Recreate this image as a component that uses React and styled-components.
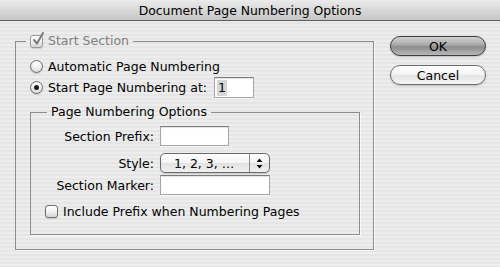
import React from 'react';
import styled, { createGlobalStyle } from 'styled-components';

const GlobalStyle = createGlobalStyle`
  html, body {
    margin: 0;
    padding: 0;
  }
  body {
    font-family: "DejaVu Sans", "Liberation Sans", sans-serif;
    font-size: 12.5px;
    color: #000;
  }
`;

const Window = styled.div`
  width: 500px;
  height: 267px;
  overflow: hidden;
  background: repeating-linear-gradient(
    to bottom,
    #ededed 0px,
    #ededed 2px,
    #e5e5e5 2px,
    #e5e5e5 4px
  );
`;

const TitleBar = styled.div`
  height: 21px;
  border-bottom: 1px solid #5a5a5a;
  background: linear-gradient(to bottom, #ebebeb 0%, #d6d6d6 55%, #c6c6c6 100%);
  display: flex;
  align-items: center;
  justify-content: center;
  font-size: 12.4px;
  padding-top: 1px;
  box-sizing: border-box;
`;

const Body = styled.div`
  display: flex;
  align-items: flex-start;
  padding: 12px 0 0 15px;
`;

const Group = styled.fieldset`
  margin: 0;
  margin-top: ${p => p.$mt || 0}px;
  padding: 0 ${p => p.$padRight || 0}px ${p => p.$padBottom || 14}px 14px;
  width: ${p => p.$width}px;
  box-sizing: border-box;
  border: 1px solid #8c8c8c;
  box-shadow: 1px 1px 0 #fafafa;
  min-inline-size: 0;
`;

const Legend = styled.legend`
  margin-left: ${p => p.$offset}px;
  padding: 0 4px;
  height: 16px;
  line-height: 16px;
  display: flex;
  align-items: center;
  gap: 5px;
  color: ${p => (p.$disabled ? '#808080' : '#000')};
`;

const Row = styled.div`
  display: flex;
  align-items: center;
  gap: 5px;
  height: ${p => p.$h || 20}px;
  margin-top: ${p => p.$mt || 0}px;
`;

const Radio = styled.span`
  width: 13px;
  height: 13px;
  border-radius: 50%;
  box-sizing: border-box;
  border: 1px solid #6e6e6e;
  background: radial-gradient(circle at 50% 30%, #ffffff 0%, #f0f0f0 45%, #c8c8c8 100%);
  display: inline-flex;
  align-items: center;
  justify-content: center;
  flex: none;
  box-shadow: 0 1px 1px rgba(0, 0, 0, 0.15);

  &::after {
    content: '';
    width: 5px;
    height: 5px;
    border-radius: 50%;
    background: #1a1a1a;
    display: ${p => (p.$on ? 'block' : 'none')};
  }
`;

const CheckBox = styled.span`
  position: relative;
  width: 13px;
  height: 13px;
  border-radius: 3px;
  box-sizing: border-box;
  border: 1px solid ${p => (p.$disabled ? '#9a9a9a' : '#6e6e6e')};
  background: linear-gradient(to bottom, #ffffff 0%, #f2f2f2 50%, #d4d4d4 100%);
  flex: none;
  box-shadow: 0 1px 1px rgba(0, 0, 0, 0.12);

  svg {
    position: absolute;
    left: 1px;
    top: -4px;
  }
`;

const TextField = styled.div`
  width: ${p => p.$w}px;
  height: ${p => p.$h || 20}px;
  margin-left: ${p => p.$ml || 0}px;
  box-sizing: border-box;
  background: #fff;
  border: 1px solid #a6a6a6;
  border-top-color: #7a7a7a;
  box-shadow: inset 0 1px 1px rgba(0, 0, 0, 0.12), 0 1px 0 #f6f6f6;
  display: flex;
  align-items: center;
  padding-left: 2px;
  flex: none;
`;

const Selected = styled.span`
  background: #d6d6d6;
  padding: 0 1px;
  line-height: 16px;
`;

const Form = styled.div`
  display: grid;
  grid-template-columns: 109px auto;
  column-gap: 6px;
  align-items: center;
  justify-items: start;
`;

const Label = styled.span`
  justify-self: end;
  margin-top: ${p => p.$mt || 0}px;
`;

const Field = styled.div`
  margin-top: ${p => p.$mt || 0}px;
  display: flex;
`;

const Popup = styled.div`
  width: 110px;
  height: 20px;
  box-sizing: border-box;
  border: 1px solid #6a6a6a;
  border-radius: 5px;
  background: linear-gradient(to bottom, #ffffff 0%, #f4f4f4 50%, #e2e2e2 51%, #f0f0f0 100%);
  display: flex;
  align-items: stretch;
  box-shadow: 0 1px 1px rgba(0, 0, 0, 0.15);
`;

const PopupText = styled.span`
  flex: 1;
  display: flex;
  align-items: center;
  padding-left: 13px;
`;

const Stepper = styled.span`
  width: 19px;
  border-left: 1px solid #8a8a8a;
  display: flex;
  align-items: center;
  justify-content: center;
`;

const CheckRow = styled.div`
  grid-column: 1 / span 2;
  display: flex;
  align-items: center;
  gap: 5px;
  margin-top: 8px;
  height: 16px;
`;

const Buttons = styled.div`
  display: flex;
  flex-direction: column;
  gap: 9px;
  margin-left: 16px;
  margin-top: 3px;
`;

const Button = styled.button`
  width: 96px;
  height: 20px;
  padding: 0;
  border-radius: 10px;
  font-family: inherit;
  font-size: 12.5px;
  color: #000;
  border: 1px solid ${p => (p.$primary ? '#3e3e3e' : '#6c6c6c')};
  background: ${p =>
    p.$primary
      ? 'linear-gradient(to bottom, #d2d2d2 0%, #a6a6a6 45%, #8c8c8c 55%, #b8b8b8 100%)'
      : 'linear-gradient(to bottom, #ffffff 0%, #f4f4f4 45%, #e4e4e4 55%, #f6f6f6 100%)'};
  box-shadow: 0 1px 2px rgba(0, 0, 0, 0.2);
  display: flex;
  align-items: center;
  justify-content: center;
`;

function Check() {
  return (
    <svg width="13" height="14" viewBox="0 0 13 14">
      <path d="M2 8 L5 11.5 L11 1" fill="none" stroke="#7a7a7a" strokeWidth="2" strokeLinecap="round" strokeLinejoin="round" />
    </svg>
  );
}

function Arrows() {
  return (
    <svg width="7" height="11" viewBox="0 0 7 11">
      <path d="M3.5 0.5 L6.5 4 L0.5 4 Z" fill="#111" />
      <path d="M3.5 10.5 L6.5 7 L0.5 7 Z" fill="#111" />
    </svg>
  );
}

export default function App() {
  return (
    <Window>
      <GlobalStyle />
      <TitleBar>Document Page Numbering Options</TitleBar>
      <Body>
        <Group $width={359} $padRight={13}>
          <Legend $offset={-4} $disabled>
            <CheckBox $disabled>
              <Check />
            </CheckBox>
            Start Section
          </Legend>
          <Row $mt={7}>
            <Radio />
            Automatic Page Numbering
          </Row>
          <Row $mt={1} $h={21}>
            <Radio $on />
            Start Page Numbering at:
            <TextField $w={40} $h={21} $ml={2}>
              <Selected>1</Selected>
            </TextField>
          </Row>
          <Group $width={330} $mt={6} $padBottom={15}>
            <Legend $offset={2}>Page Numbering Options</Legend>
            <Form>
              <Label $mt={6}>Section Prefix:</Label>
              <Field $mt={6}>
                <TextField $w={69} />
              </Field>
              <Label $mt={7}>Style:</Label>
              <Field $mt={7}>
                <Popup>
                  <PopupText>1, 2, 3, …</PopupText>
                  <Stepper>
                    <Arrows />
                  </Stepper>
                </Popup>
              </Field>
              <Label $mt={2}>Section Marker:</Label>
              <Field $mt={2}>
                <TextField $w={110} />
              </Field>
              <CheckRow>
                <CheckBox />
                Include Prefix when Numbering Pages
              </CheckRow>
            </Form>
          </Group>
        </Group>
        <Buttons>
          <Button $primary>OK</Button>
          <Button>Cancel</Button>
        </Buttons>
      </Body>
    </Window>
  );
}
